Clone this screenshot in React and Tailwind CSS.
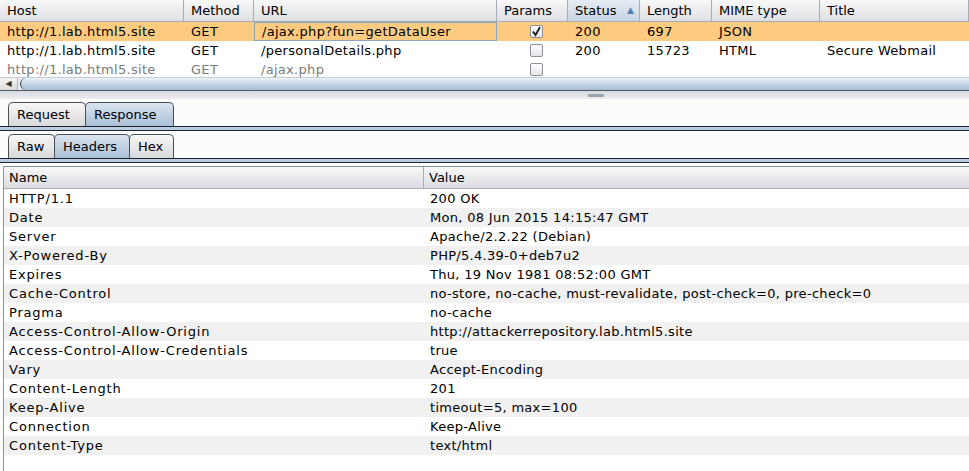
import React from "react";

const cols = [
  { name: "Host", w: "w-[184px]" },
  { name: "Method", w: "w-[70px]" },
  { name: "URL", w: "w-[243px]" },
  { name: "Params", w: "w-[71px]" },
  { name: "Status", w: "w-[72px]" },
  { name: "Length", w: "w-[72px]" },
  { name: "MIME type", w: "w-[108px]" },
  { name: "Title", w: "flex-1" },
];

const rows = [
  ["http://1.lab.html5.site", "GET", "/ajax.php?fun=getDataUser", true, "200", "697", "JSON", ""],
  ["http://1.lab.html5.site", "GET", "/personalDetails.php", false, "200", "15723", "HTML", "Secure Webmail"],
  ["http://1.lab.html5.site", "GET", "/ajax.php", false, "", "", "", ""],
];

const headers = [
  ["HTTP/1.1", "200 OK"],
  ["Date", "Mon, 08 Jun 2015 14:15:47 GMT"],
  ["Server", "Apache/2.2.22 (Debian)"],
  ["X-Powered-By", "PHP/5.4.39-0+deb7u2"],
  ["Expires", "Thu, 19 Nov 1981 08:52:00 GMT"],
  ["Cache-Control", "no-store, no-cache, must-revalidate, post-check=0, pre-check=0"],
  ["Pragma", "no-cache"],
  ["Access-Control-Allow-Origin", "http://attackerrepository.lab.html5.site"],
  ["Access-Control-Allow-Credentials", "true"],
  ["Vary", "Accept-Encoding"],
  ["Content-Length", "201"],
  ["Keep-Alive", "timeout=5, max=100"],
  ["Connection", "Keep-Alive"],
  ["Content-Type", "text/html"],
];

function Checkbox({ checked }) {
  return (
    <div className="w-[13px] h-[13px] rounded-[2px] border border-[#8a8f98] bg-gradient-to-b from-[#ffffff] to-[#e3e5e9] flex items-center justify-center">
      {checked && (
        <svg width="11" height="11" viewBox="0 0 11 11">
          <path d="M2 5.5 L4.5 9 L9 1" fill="none" stroke="#1a1a1a" strokeWidth="1.8" />
        </svg>
      )}
    </div>
  );
}

function Tab({ label, active, w }) {
  return (
    <div
      className={
        "h-[24px] " + w + " -mr-px rounded-t-[5px] border border-b-0 border-[#4a4f57] px-[8px] flex items-center " +
        (active
          ? "bg-gradient-to-b from-[#dbe5ef] to-[#a9c0d6]"
          : "bg-gradient-to-b from-[#f7f7f7] to-[#d9d9dc]")
      }
    >
      {label}
    </div>
  );
}

function TabStrip() {
  return <div className="h-[5px] border-y border-[#1d2330] bg-[#b9cde0]" />;
}

export default function App() {
  return (
    <div className="w-[969px] h-[471px] overflow-hidden bg-[#fcfcfc] text-[13px] leading-none text-black font-['DejaVu_Sans',sans-serif]">
      {/* Top proxy history table */}
      <div className="h-[91px] overflow-hidden bg-white flex flex-col">
        <div className="h-[22px] flex border-b border-[#a8adb5] bg-gradient-to-b from-[#f8f8f9] to-[#dfe0e4]">
          {cols.map((c) => (
            <div
              key={c.name}
              className={
                c.w +
                " flex items-center pl-[7px] border-r border-[#a8adb5] " +
                (c.name === "Status" ? "bg-gradient-to-b from-[#e6ecf3] to-[#c8d5e3] justify-between pr-[5px]" : "")
              }
            >
              <span>{c.name}</span>
              {c.name === "Status" && <span className="text-[9px] text-[#4f7fb5]">▲</span>}
            </div>
          ))}
        </div>
        {rows.map((r, i) => (
          <div
            key={i}
            className={
              "flex shrink-0 tracking-[0.3px] " +
              (i === 2 ? "h-[17px] text-[#7a7a7a] items-start pt-[2px]" : "h-[19px] items-center") +
              (i === 0 ? " bg-[#fdcb80]" : "")
            }
          >
            {r.map((v, j) => (
              <div
                key={j}
                className={
                  cols[j].w +
                  " h-full flex items-center pl-[7px] " +
                  (i === 0 && j === 2 ? "border border-[#8ea3bb] pl-[6px]" : "") +
                  (j === 3 ? " justify-center pl-0" : "")
                }
              >
                {j === 3 ? <Checkbox checked={v} /> : v}
              </div>
            ))}
          </div>
        ))}
        {/* horizontal scrollbar */}
        <div className="h-[14px] shrink-0 flex border-t border-[#c5ccd6] border-b border-b-[#4d5a6b] bg-[#e9edf2]">
          <div className="w-[18px] flex items-center justify-center text-[8px] text-[#333] bg-gradient-to-b from-[#f4f4f4] to-[#dcdcdc] border-r border-[#b3b8bf]">
            ◀
          </div>
          <div className="flex-1 ml-[2px] rounded-l-[8px] border-l border-[#30425a] bg-gradient-to-b from-[#eef3f8] via-[#c2d4e6] to-[#a9bfd5]" />
        </div>
      </div>

      {/* splitter */}
      <div className="h-[8px] bg-gradient-to-b from-[#d6d9de] to-[#eceef1] flex justify-center items-center">
        <div className="w-[16px] h-[3px] ml-[222px] rounded-[1px] bg-[#9da3ab]" />
      </div>

      {/* Request / Response tabs */}
      <div className="pt-[3px] pl-[8px] flex items-end">
        <Tab label="Request" w="w-[78px]" />
        <Tab label="Response" active w="w-[89px]" />
      </div>
      <TabStrip />

      <div className="pt-[3px] pl-[8px] flex items-end">
        <Tab label="Raw" w="w-[47px]" />
        <Tab label="Headers" active w="w-[76px]" />
        <Tab label="Hex" w="w-[45px]" />
      </div>
      <TabStrip />

      {/* Headers table */}
      <div className="mt-[3px] ml-[3px] border-l border-t border-[#8d939c] bg-white">
        <div className="h-[22px] flex border-b border-[#a8adb5] bg-gradient-to-b from-[#f8f8f9] to-[#dcdde1]">
          <div className="w-[420px] flex items-center pl-[5px] border-r border-[#a8adb5]">Name</div>
          <div className="flex-1 flex items-center pl-[5px]">Value</div>
        </div>
        {headers.map(([n, v], i) => (
          <div key={n} className={"h-[19px] flex items-center " + (i % 2 === 1 ? "bg-[#f1f1f1]" : "bg-white")}>
            <div className="w-[420px] pl-[5px] tracking-[0.8px]">{n}</div>
            <div className="flex-1 pl-[6px] tracking-[0.3px]">{v}</div>
          </div>
        ))}
        <div className="h-[30px] bg-white" />
      </div>
    </div>
  );
}
